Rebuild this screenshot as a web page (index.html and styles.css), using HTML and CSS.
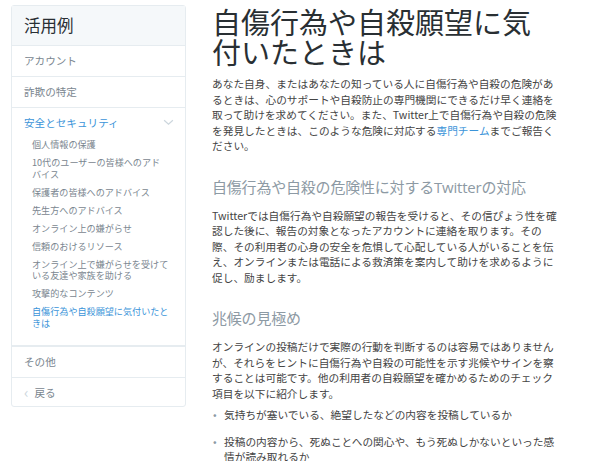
FILE: index.html
```html
<!DOCTYPE html>
<html lang="ja">
<head>
  <meta charset="UTF-8" />
  <title>自傷行為や自殺願望に気付いたときは</title>
  <link rel="stylesheet" href="styles.css">
</head>
<body>
  <div class="page">
    <aside class="sidenav">
      <div class="sidenav-title">活用例</div>
      <a class="nav-row">アカウント</a>
      <a class="nav-row">詐欺の特定</a>
      <div class="nav-group">
        <div class="nav-group-head">
          <span>安全とセキュリティ</span>
          <svg class="chev" viewBox="0 0 12 8" width="12" height="8"><path d="M1 1.5 L6 6 L11 1.5" fill="none" stroke="#ccd6dd" stroke-width="1.4"/></svg>
        </div>
        <ul class="sub-list">
          <li>個人情報の保護</li>
          <li>10代のユーザーの皆様へのアドバイス</li>
          <li>保護者の皆様へのアドバイス</li>
          <li>先生方へのアドバイス</li>
          <li>オンライン上の嫌がらせ</li>
          <li>信頼のおけるリソース</li>
          <li>オンライン上で嫌がらせを受けている友達や家族を助ける</li>
          <li>攻撃的なコンテンツ</li>
          <li class="current">自傷行為や自殺願望に気付いたときは</li>
        </ul>
      </div>
      <a class="nav-row">その他</a>
      <a class="nav-row back"><span class="back-arrow">‹</span>戻る</a>
    </aside>

    <main class="article">
      <h1>自傷行為や自殺願望に気付いたときは</h1>
      <p>あなた自身、またはあなたの知っている人に自傷行為や自殺の危険があるときは、心のサポートや自殺防止の専門機関にできるだけ早く連絡を取って助けを求めてください。また、Twitter上で自傷行為や自殺の危険を発見したときは、このような危険に対応する<a href="#">専門チーム</a>までご報告ください。</p>

      <h2>自傷行為や自殺の危険性に対するTwitterの対応</h2>
      <p>Twitterでは自傷行為や自殺願望の報告を受けると、その信ぴょう性を確認した後に、報告の対象となったアカウントに連絡を取ります。その際、その利用者の心身の安全を危惧して心配している人がいることを伝え、オンラインまたは電話による救済策を案内して助けを求めるように促し、励まします。</p>

      <h2>兆候の見極め</h2>
      <p>オンラインの投稿だけで実際の行動を判断するのは容易ではありませんが、それらをヒントに自傷行為や自殺の可能性を示す兆候やサインを察することは可能です。他の利用者の自殺願望を確かめるためのチェック項目を以下に紹介します。</p>
      <ul class="signs">
        <li>気持ちが塞いでいる、絶望したなどの内容を投稿しているか</li>
        <li>投稿の内容から、死ぬことへの関心や、もう死ぬしかないといった感情が読み取れるか</li>
      </ul>
    </main>
  </div>
</body>
</html>
```

FILE: styles.css
```css
body {
  margin: 0;
  font-family: "Noto Sans CJK JP", "Noto Sans", sans-serif;
  background: #ffffff;
  color: #444;
}
.page {
  display: flex;
  align-items: flex-start;
  padding: 5px 0 0 11px;
}

/* side navigation */
.sidenav {
  width: 173px;
  flex-shrink: 0;
  border: 1px solid #e6ecf0;
  border-radius: 3px;
  background: #fff;
}
.sidenav-title {
  height: 39px;
  line-height: 39px;
  padding-left: 12px;
  font-size: 16.5px;
  color: #292f33;
  background: #f5f8fa;
  border-bottom: 1px solid #e6ecf0;
}
.nav-row {
  display: block;
  height: 30px;
  line-height: 30px;
  padding-left: 12px;
  font-size: 10.6px;
  color: #7a868f;
  border-bottom: 1px solid #e6ecf0;
}
.nav-row:last-child {
  border-bottom: none;
  height: 28px;
  line-height: 28px;
}
.nav-group {
  border-bottom: 2px solid #e6ecf0;
  padding-bottom: 16px;
}
.nav-group-head {
  display: flex;
  justify-content: space-between;
  align-items: center;
  height: 28px;
  padding: 0 11px 0 12px;
  font-size: 10.6px;
  color: #3b94d9;
}
.chev {
  width: 11px;
  height: 7px;
}
.sub-list {
  list-style: none;
  margin: 3px 0 0;
  padding: 0 16px 0 20px;
}
.sub-list li {
  font-size: 9.1px;
  line-height: 11.5px;
  color: #7a868f;
  margin-bottom: 6.5px;
}
.sub-list li:last-child {
  margin-bottom: 0;
}
.sub-list li.current {
  color: #3b94d9;
}
.back-arrow {
  color: #ccd6dd;
  font-size: 15px;
  margin-right: 6px;
  vertical-align: -1px;
}

/* article */
.article {
  width: 347px;
  margin-left: 26px;
}
h1 {
  margin: 0;
  font-size: 29px;
  font-weight: 400;
  line-height: 30px;
  color: #292f33;
  padding-top: 1px;
}
.article p {
  margin: 10px 0 0;
  font-size: 10.7px;
  line-height: 15.5px;
  color: #444;
}
.article a {
  color: #3b94d9;
  text-decoration: none;
}
h2 {
  margin: 22px 0 0;
  font-family: "Open Sans", "Noto Sans CJK JP", sans-serif;
  font-size: 15px;
  font-weight: 400;
  line-height: 22px;
  letter-spacing: -0.2px;
  color: #8d9aa4;
}
.signs {
  margin: 6px 0 0;
  padding-left: 0;
  list-style: none;
}
.signs li {
  position: relative;
  padding-left: 12px;
  font-size: 10.7px;
  line-height: 15.5px;
  margin-bottom: 11px;
}
.signs li::before {
  content: "•";
  position: absolute;
  left: 1px;
  color: #8d9aa4;
}
```
